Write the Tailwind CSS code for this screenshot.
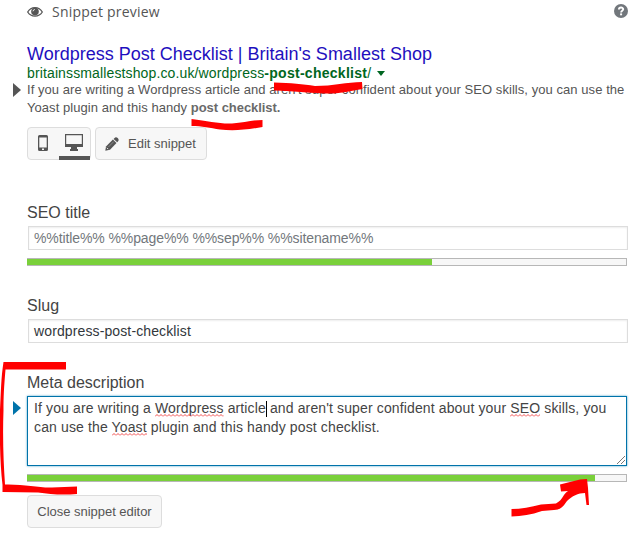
<!DOCTYPE html>
<html lang="en">
<head>
  <meta charset="UTF-8">
  <title>Snippet preview</title>
  <script src="https://cdn.jsdelivr.net/npm/@tailwindcss/browser@4"></script>
</head>
<body class="bg-white font-['Liberation_Sans',Arial,sans-serif] text-[#555]">
<div class="relative w-[639px] h-[542px] overflow-hidden pl-[27px] pr-3">

  <header class="flex items-center justify-between h-6">
    <h2 class="flex items-center gap-[9px] font-['Open_Sans',sans-serif] text-sm">
      <svg class="w-4 h-3" viewBox="0 0 16 12" fill="none" stroke="#555">
        <path d="M.7 6C4 .2 12 .2 15.300 6C12 11.500 4 11.500 .7 6Z" stroke-width="1.300"/>
        <circle cx="8" cy="5.600" r="3.800" fill="#555" stroke="none"/>
        <path d="M6 5.300A2 2 0 0 1 7.800 3.500" stroke="#fff" stroke-width=".9"/>
      </svg>
      <span class="tracking-[.2px]">Snippet preview</span>
    </h2>
    <svg class="w-[14px] h-[14px] -mt-0.5 -mr-px" viewBox="0 0 14 14">
      <circle cx="7" cy="7" r="7" fill="#72777c"/>
      <path d="M4.900 5.600C4.900 2.800 9.200 2.900 9.200 5.300C9.200 6.700 7.100 6.700 7.100 8.400" fill="none" stroke="#fff" stroke-width="1.900"/>
      <rect x="6.100" y="9.400" width="2" height="1.900" fill="#fff"/>
    </svg>
  </header>

  <!-- search result -->
  <section class="relative mt-[19px] whitespace-nowrap">
    <svg class="absolute -left-[14px] top-[40px] w-2 h-[14px]" viewBox="0 0 8 14"><path d="M0 0L8 7L0 14Z" fill="#555"/></svg>
    <h3 class="h-[22px] leading-[22px] text-lg text-[#1e0fbe]">Wordpress Post Checklist | Britain's Smallest Shop</h3>
    <div class="flex items-center h-4 leading-4 text-sm text-[#006621]">
      <span class="tracking-[.13px]">britainssmallestshop.co.uk/wordpress<b class="tracking-[.27px]">-post-checklist</b>/</span>
      <svg class="ml-[6px] w-2 h-[5px]" viewBox="0 0 8 5"><path d="M0 0H8L4 5Z" fill="#006621"/></svg>
    </div>
    <p class="leading-[18px] text-[13px] tracking-[.06px]">If you are writing a Wordpress article and aren't super confident about your SEO skills, you can use the<br>Yoast plugin and this handy <b class="tracking-[-.05px] text-[#6a6a6a]">post checklist.</b></p>
  </section>

  <div class="flex gap-1 mt-[10px] h-[33px]">
    <div class="flex w-16 rounded border border-[#ddd] bg-[#f7f7f7]">
      <button class="flex w-[31px] justify-center pt-[7px]">
        <svg class="w-[10px] h-4" viewBox="0 0 10 16"><path fill="#555" fill-rule="evenodd" d="M1.500 0H8.500Q10 0 10 1.500V14.500Q10 16 8.500 16H1.500Q0 16 0 14.500V1.500Q0 0 1.500 0ZM1.300 2.500V12.500H8.700V2.500ZM4 13.400V15H6V13.400Z"/></svg>
      </button>
      <button class="flex w-[32px] justify-center pt-[6px] border-b-4 border-[#555] -mb-px">
        <svg class="w-[18px] h-[17px]" viewBox="0 0 18 17"><path fill="#555" fill-rule="evenodd" d="M0 0H18V13H12V15H13V17H5V15H6V13H0ZM1.200 1.200V10H16.800V1.200Z"/></svg>
      </button>
    </div>
    <button class="flex items-center gap-[9px] w-[112px] pl-[9px] rounded border border-[#ddd] bg-[#f7f7f7] text-[13px] whitespace-nowrap">
      <svg class="w-[14px] h-[14px] shrink-0" viewBox="0 0 14 14" fill="#555">
        <path d="M9.300 1.200Q10.900 -.4 12.700 1.100Q14.500 3 12.900 4.500L12.200 5.200L8.600 1.900Z"/>
        <path d="M7.900 2.500L11.500 6L5 12.800L.3 13.800L1 9.400Z"/>
        <path d="M8.700 4.700L3.400 10" stroke="#aaa" stroke-width=".6"/>
        <path d="M1.900 10.800L3.200 12.100" stroke="#f7f7f7" stroke-width=".9"/>
      </svg>
      <span>Edit snippet</span>
    </button>
  </div>

  <!-- editor form -->
  <form class="mt-[43px] text-[#444]">
    <label class="block h-[23px] leading-5 text-base">SEO title</label>
    <div class="ml-px w-[600px] h-6 border border-[#ddd] shadow-[inset_0_1px_2px_rgba(0,0,0,.07)] pl-[5px] leading-[23px] text-sm tracking-[-.1px] text-[#72777c]"><span>%%title%% %%page%% %%sep%% %%sitename%%</span></div>
    <div class="mt-2 w-[600px] h-2 border border-[#b7b7b7] bg-[#f7f7f7]"><div class="-ml-px w-[405px] h-full bg-[#7ad03a]"></div></div>

    <label class="block mt-[30px] h-[23px] leading-5 text-base">Slug</label>
    <div class="ml-px w-[600px] h-6 border border-[#ddd] shadow-[inset_0_1px_2px_rgba(0,0,0,.07)] pl-[5px] leading-[22px] text-sm tracking-[.12px] text-[#32373c]"><span>wordpress-post-checklist</span></div>

    <label class="block mt-[30px] h-[23px] leading-5 text-base">Meta description</label>
    <div class="relative w-[600px] h-[70px] border border-[#0073aa] shadow-[0_0_2px_rgba(30,140,190,.8)] pl-[6px] pt-[2px] leading-[19px] text-sm tracking-[.13px] text-[#444] whitespace-nowrap">
      <svg class="absolute -left-[15px] top-1 w-2 h-[14px]" viewBox="0 0 8 14"><path d="M0 0L8 7L0 14Z" fill="#0073aa"/></svg>
      <svg class="absolute w-0 h-0"><defs><pattern id="squiggle" width="4" height="3" patternUnits="userSpaceOnUse"><path d="M0 2.500L2 .5L4 2.500" fill="none" stroke="#e22" stroke-width=".8"/></pattern></defs></svg>
      If you are writing a <span class="relative">Wordpress<svg class="absolute left-0 top-[14px] w-full h-[3px]"><rect width="100%" height="3" fill="url(#squiggle)"/></svg></span> article<span class="inline-block w-px h-4 -mr-px align-middle bg-black"></span> and aren't super confident about your <span class="relative">SEO<svg class="absolute left-0 top-[14px] w-full h-[3px]"><rect width="100%" height="3" fill="url(#squiggle)"/></svg></span> skills, you<br>can use the <span class="relative">Yoast<svg class="absolute left-0 top-[14px] w-full h-[3px]"><rect width="100%" height="3" fill="url(#squiggle)"/></svg></span> plugin and this handy post checklist.
      <svg class="absolute right-px bottom-px w-2 h-2" viewBox="0 0 8 8" stroke="#555" stroke-width=".8"><path d="M0 8L8 0M4 8L8 4"/></svg>
    </div>
    <div class="mt-2 w-[600px] h-2 border border-[#b7b7b7] bg-[#f7f7f7]"><div class="-ml-px w-[568px] h-full bg-[#7ad03a]"></div></div>
    <button type="button" class="mt-[13px] w-[135px] h-[33px] rounded border border-[#ddd] bg-[#f7f7f7] text-[13px] tracking-[-.03px] text-[#555] whitespace-nowrap">Close snippet editor</button>
  </form>

  <!-- red marker strokes over the page -->
  <svg class="absolute inset-0 w-[639px] h-[542px] pointer-events-none" viewBox="0 0 639 542" fill="#f00">
    <path d="M274 82.500C291 83 303 84 315 86C333 86 347 82 362 82L362.500 89C350 91 342 93.500 330 93.500C312 93.500 297 91 274 90.500Z"/>
    <path d="M191.500 119C208 121 219 124 232 123.500C244 123 252 120 262.500 120V127C246 130 233 131 220 129.500C210 128 202 126 191.500 126Z"/>
    <path d="M3.500 362H66V369.500H5.500C4 387 3.500 397 3.500 410C2.500 438 3.500 462 5 484.500C24 484 39 488 52 487.500L77 486.500V494C61 495.500 50 494 38 492.500L2.500 492V485C0 463 -.5 437 0 410C1 391 1 378 3.500 362Z"/>
    <path d="M511.500 509C521 509 531 507 541 504.500L556 503.500C564 499 562 495 568 491L561 491.500L560 484.500L580 479.500L587 479L588 488L589 505H586.500L585 493C578 493 572 496 567 501C563 507 560 510 554 510L542 511C531 515 522 516 511.500 516.500Z"/>
  </svg>
</div>
</body>
</html>
